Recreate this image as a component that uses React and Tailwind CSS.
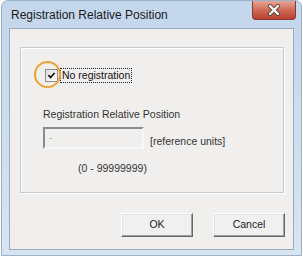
import React from 'react';

const font = { fontFamily: '"Liberation Sans", Arial, sans-serif' };

const CloseButton = () => (
  <div className="ml-auto mr-[5px] w-[44px] h-[19px] rounded-b-[4px] border border-t-0 border-[#8a3a30] bg-gradient-to-b from-[#e8a596] via-[#cf6a58] to-[#b8412e] flex items-center justify-center">
    <svg width="14" height="12" viewBox="0 0 14 12">
      <path d="M3 2 L11 10 M11 2 L3 10" stroke="#5a3a36" strokeWidth="4" strokeLinecap="round" />
      <path d="M3 2 L11 10 M11 2 L3 10" stroke="#ffffff" strokeWidth="2.4" strokeLinecap="round" />
    </svg>
  </div>
);

const Checkbox = () => (
  <div className="w-[13px] h-[13px] border border-[#8e8f8f] bg-gradient-to-br from-[#dcdcdc] to-[#ffffff] flex items-center justify-center">
    <svg width="9" height="9" viewBox="0 0 9 9">
      <path d="M1.5 4.2 L3.6 6.5 L7.6 2" stroke="#111" strokeWidth="1.8" fill="none" />
    </svg>
  </div>
);

const Button = ({ children }) => (
  <div className="h-[24px] w-[72px] bg-[#f0f0f0] border border-t-[#ffffff] border-l-[#ffffff] border-r-[#696969] border-b-[#696969] shadow-[inset_-1px_-1px_0_#a0a0a0,inset_1px_1px_0_#e3e3e3] flex items-center justify-center text-[10.5px] text-[#222]">
    {children}
  </div>
);

export default function App() {
  return (
    <div className="relative w-[303px] h-[258px] bg-white pl-[1px] overflow-hidden" style={font}>
      <div className="w-[301px] h-[256px] rounded-t-[7px] border border-[#9cb0c8] bg-gradient-to-b from-[#c3d6ec] to-[#d7e5f3] flex flex-col">
        {/* title bar */}
        <div className="h-[27px] flex items-start">
          <span className="pl-[9px] pt-[7px] text-[12px] leading-[14px] text-[#1b1b1b]">
            Registration Relative Position
          </span>
          <CloseButton />
        </div>

        {/* client area */}
        <div className="mx-[7px] h-[222px] border border-[#9aaabb] bg-[#f0efed] flex flex-col">
          <div className="ml-[10px] mt-[18px] w-[264px] h-[146px] border border-[#c8c8c8] shadow-[inset_1px_1px_0_#ffffff,1px_1px_0_#ffffff] pl-[22px]">
            <div className="mt-[20px] ml-[2px] flex items-center gap-[2px]">
              <Checkbox />
              <span className="border border-dotted border-[#222] px-[1px] text-[10.5px] leading-[13px] text-[#111]">
                No registration
              </span>
            </div>

            <div className="mt-[25px] text-[10.5px] leading-[12px] text-[#333]">
              Registration Relative Position
            </div>

            <div className="mt-[7px] flex items-end gap-[6px]">
              <div className="w-[101px] h-[22px] border-2 border-t-[#8c8c8c] border-l-[#8c8c8c] border-r-[#f7f7f7] border-b-[#f7f7f7] flex items-center pl-[4px]">
                <span className="text-[9px] leading-[9px] text-[#9a9a9a]">-</span>
              </div>
              <span className="pb-[2px] text-[10.5px] leading-[12px] text-[#333]">[reference units]</span>
            </div>

            <div className="mt-[13px] ml-[35px] text-[10.5px] leading-[12px] text-[#333]">
              (0 - 99999999)
            </div>
          </div>

          <div className="mt-[20px] pr-[8px] flex justify-end gap-[20px]">
            <Button>OK</Button>
            <Button>Cancel</Button>
          </div>
        </div>
      </div>

      {/* annotation circle */}
      <div className="absolute left-[34px] top-[61px] w-[27px] h-[27px] rounded-full border-[2.5px] border-[#f0a030]" />
    </div>
  );
}
